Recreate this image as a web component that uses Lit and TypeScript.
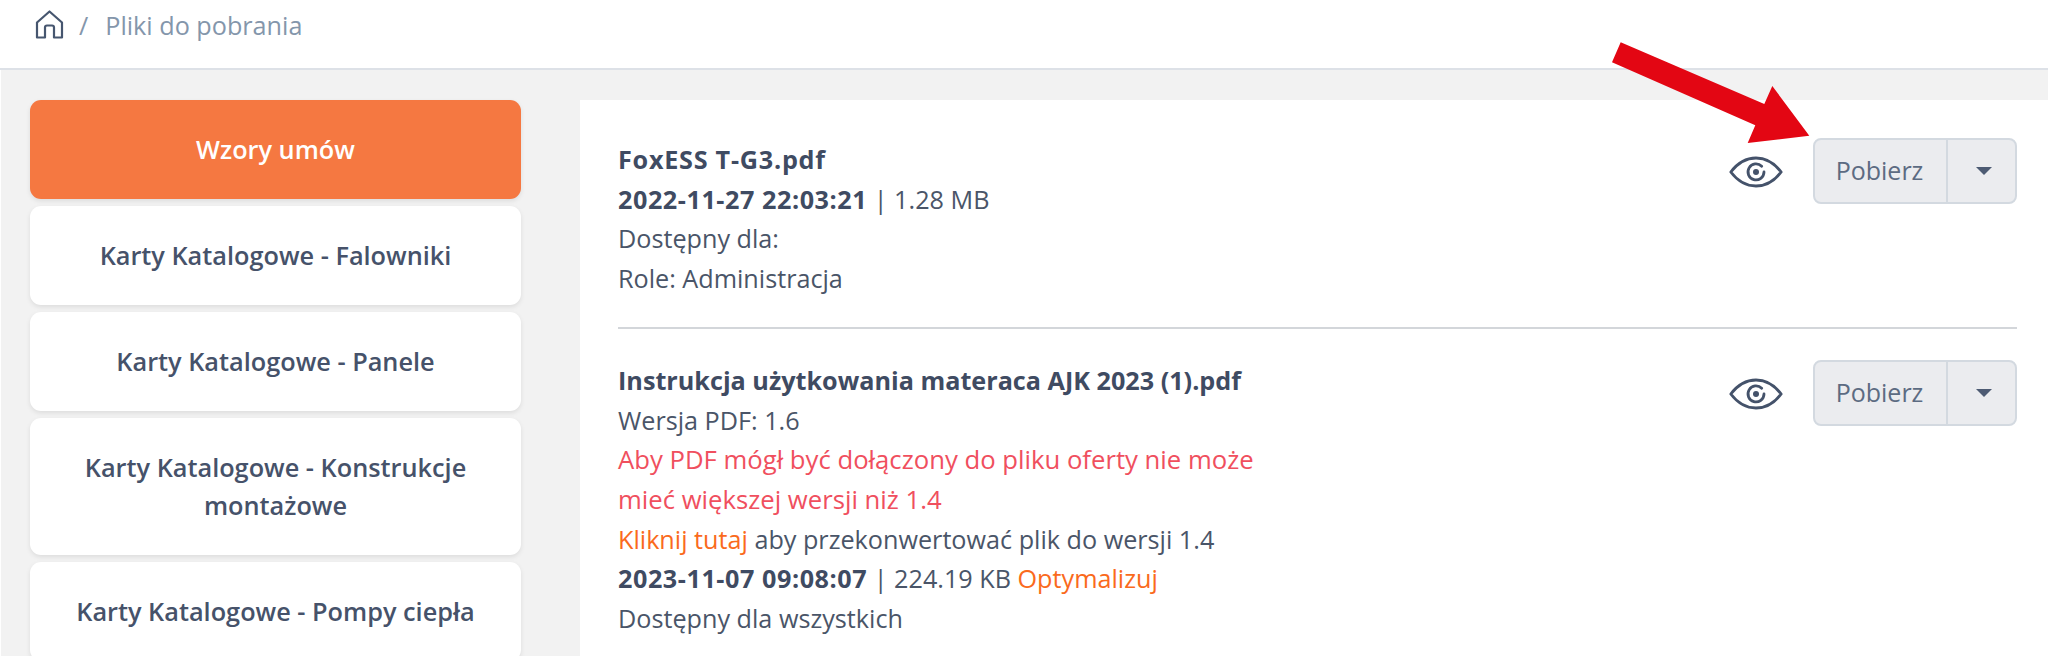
import { LitElement, html, css } from "lit";
import { customElement } from "lit/decorators.js";

const eye = html`<svg class="eye" viewBox="0 0 54 32" fill="none" stroke="#44526a" stroke-width="2.800" stroke-linecap="round" stroke-linejoin="round">
  <path d="M1.800 16C9 6.500 17 2 27 2s18 4.500 25.200 14C45 25.500 37 30 27 30S9 25.500 1.800 16Z"/>
  <path d="M32.700 10.300A8 8 0 1 0 35 16"/>
  <circle cx="27" cy="16" r="3" fill="#44526a" stroke="none"/>
</svg>`;

const actions = html`<div class="actions">
  ${eye}
  <div class="btn"><span class="btn-label">Pobierz</span><span class="btn-caret"><i class="caret"></i></span></div>
</div>`;

@customElement("app-root")
export class AppRoot extends LitElement {
  static styles = css`
    :host { display: block; width: 2048px; height: 656px; overflow: hidden; position: relative; background: #f2f2f2; font-family: "Open Sans", "Noto Sans", sans-serif; color: #4a5568; }
    .top { height: 68px; box-sizing: content-box; background: #fff; border-bottom: 2px solid #dde1e7; display: flex; align-items: flex-start; padding-left: 35px; }
    .crumb { display: flex; align-items: center; height: 50px; font-size: 25.200px; color: #8496ab; }
    .home { width: 29px; height: 30px; display: block; margin-right: 15px; margin-top: -1px; }
    .slash { color: #8496ab; margin-right: 17px; }
    .body { display: flex; padding-left: 1px; background: linear-gradient(#fff, #fff) 0 0 / 1px 100% no-repeat; height: 586px; }
    .side { width: 491px; margin: 30px 59px 0 29px; flex: none; display: flex; flex-direction: column; gap: 7px; }
    .card { background: #fff; border-radius: 11px; box-shadow: 0 2px 5px rgba(0,0,0,.09); min-height: 99px; padding: 30px 20px 0; box-sizing: border-box; text-align: center; font-size: 25.300px; font-weight: 600; line-height: 38px; color: #46526a; }
    .card.two { min-height: 137px; }
    .card.active { background: #f57841; color: #fff; }
    .main { flex: 1; margin-top: 30px; background: #fff; padding: 40px 31px 0 38px; box-sizing: border-box; height: 556px; font-size: 25.200px; line-height: 39.700px; }
    .row { display: flex; justify-content: space-between; align-items: flex-start; }
    .row.first { padding-bottom: 28px; border-bottom: 2px solid #d3d6da; margin-bottom: 32px; }
    .text { width: 660px; }
    .text div { white-space: nowrap; }
    .text .wrap { white-space: normal; font-size: 25.700px; }
    b { font-weight: 700; color: #3f4b62; }
    b.wide { letter-spacing: 0.750px; }
    b.date { letter-spacing: 0.550px; }
    .red { color: #f04f5e; }
    .org { color: #fa6a1c; }
    .actions { display: flex; align-items: center; gap: 30px; margin-top: -1px; }
    .row.first .actions { margin-top: -2px; }
    .eye { width: 54px; height: 32px; display: block; margin-top: 2px; }
    .btn { display: flex; width: 204px; height: 66px; box-sizing: border-box; border: 2px solid #d3d9e0; border-radius: 8px; background: #ebecef; color: #5c6b82; font-size: 25px; }
    .btn-label { width: 133px; padding-right: 2px; box-sizing: border-box; border-right: 2px solid #d3d9e0; display: flex; align-items: center; justify-content: center; }
    .btn-caret { flex: 1; display: flex; align-items: center; justify-content: center; padding-left: 4px; }
    .caret { width: 0; height: 0; border-left: 8px solid transparent; border-right: 8px solid transparent; border-top: 8px solid #4d5b73; }
    .arrow { position: absolute; left: 0; top: 0; width: 2048px; height: 656px; pointer-events: none; }
  `;

  render() {
    return html`
      <div class="top">
        <div class="crumb">
          <svg class="home" viewBox="0 0 28 30" fill="none" stroke="#46566f" stroke-width="2.200" stroke-linejoin="round" stroke-linecap="round">
            <path d="M1.500 12.500 14 1.500l12.500 11V27.500h-8V17.500a2 2 0 0 0-2-2h-5a2 2 0 0 0-2 2V27.500h-8Z"/>
          </svg>
          <span class="slash">/</span>
          <span>Pliki do pobrania</span>
        </div>
      </div>
      <div class="body">
        <div class="side">
          <div class="card active">Wzory umów</div>
          <div class="card">Karty Katalogowe - Falowniki</div>
          <div class="card">Karty Katalogowe - Panele</div>
          <div class="card two">Karty Katalogowe - Konstrukcje montażowe</div>
          <div class="card">Karty Katalogowe - Pompy ciepła</div>
        </div>
        <div class="main">
          <div class="row first">
            <div class="text">
              <div><b class="wide">FoxESS T-G3.pdf</b></div>
              <div><b class="date">2022-11-27 22:03:21</b> | 1.28 MB</div>
              <div>Dostępny dla:</div>
              <div>Role: Administracja</div>
            </div>
            ${actions}
          </div>
          <div class="row">
            <div class="text">
              <div><b>Instrukcja użytkowania materaca AJK 2023 (1).pdf</b></div>
              <div>Wersja PDF: 1.6</div>
              <div class="wrap red">Aby PDF mógł być dołączony do pliku oferty nie może mieć większej wersji niż 1.4</div>
              <div><span class="org">Kliknij tutaj</span> aby przekonwertować plik do wersji 1.4</div>
              <div><b class="date">2023-11-07 09:08:07</b> | 224.19 KB <span class="org">Optymalizuj</span></div>
              <div>Dostępny dla wszystkich</div>
            </div>
            ${actions}
          </div>
        </div>
      </div>
      <svg class="arrow" viewBox="0 0 2048 656">
        <polygon fill="#e30613" points="1620.700,42.300 1612,62.300 1755.300,125.300 1747.700,143 1809.300,135.700 1772.300,86 1764.300,104"/>
      </svg>
    `;
  }
}
